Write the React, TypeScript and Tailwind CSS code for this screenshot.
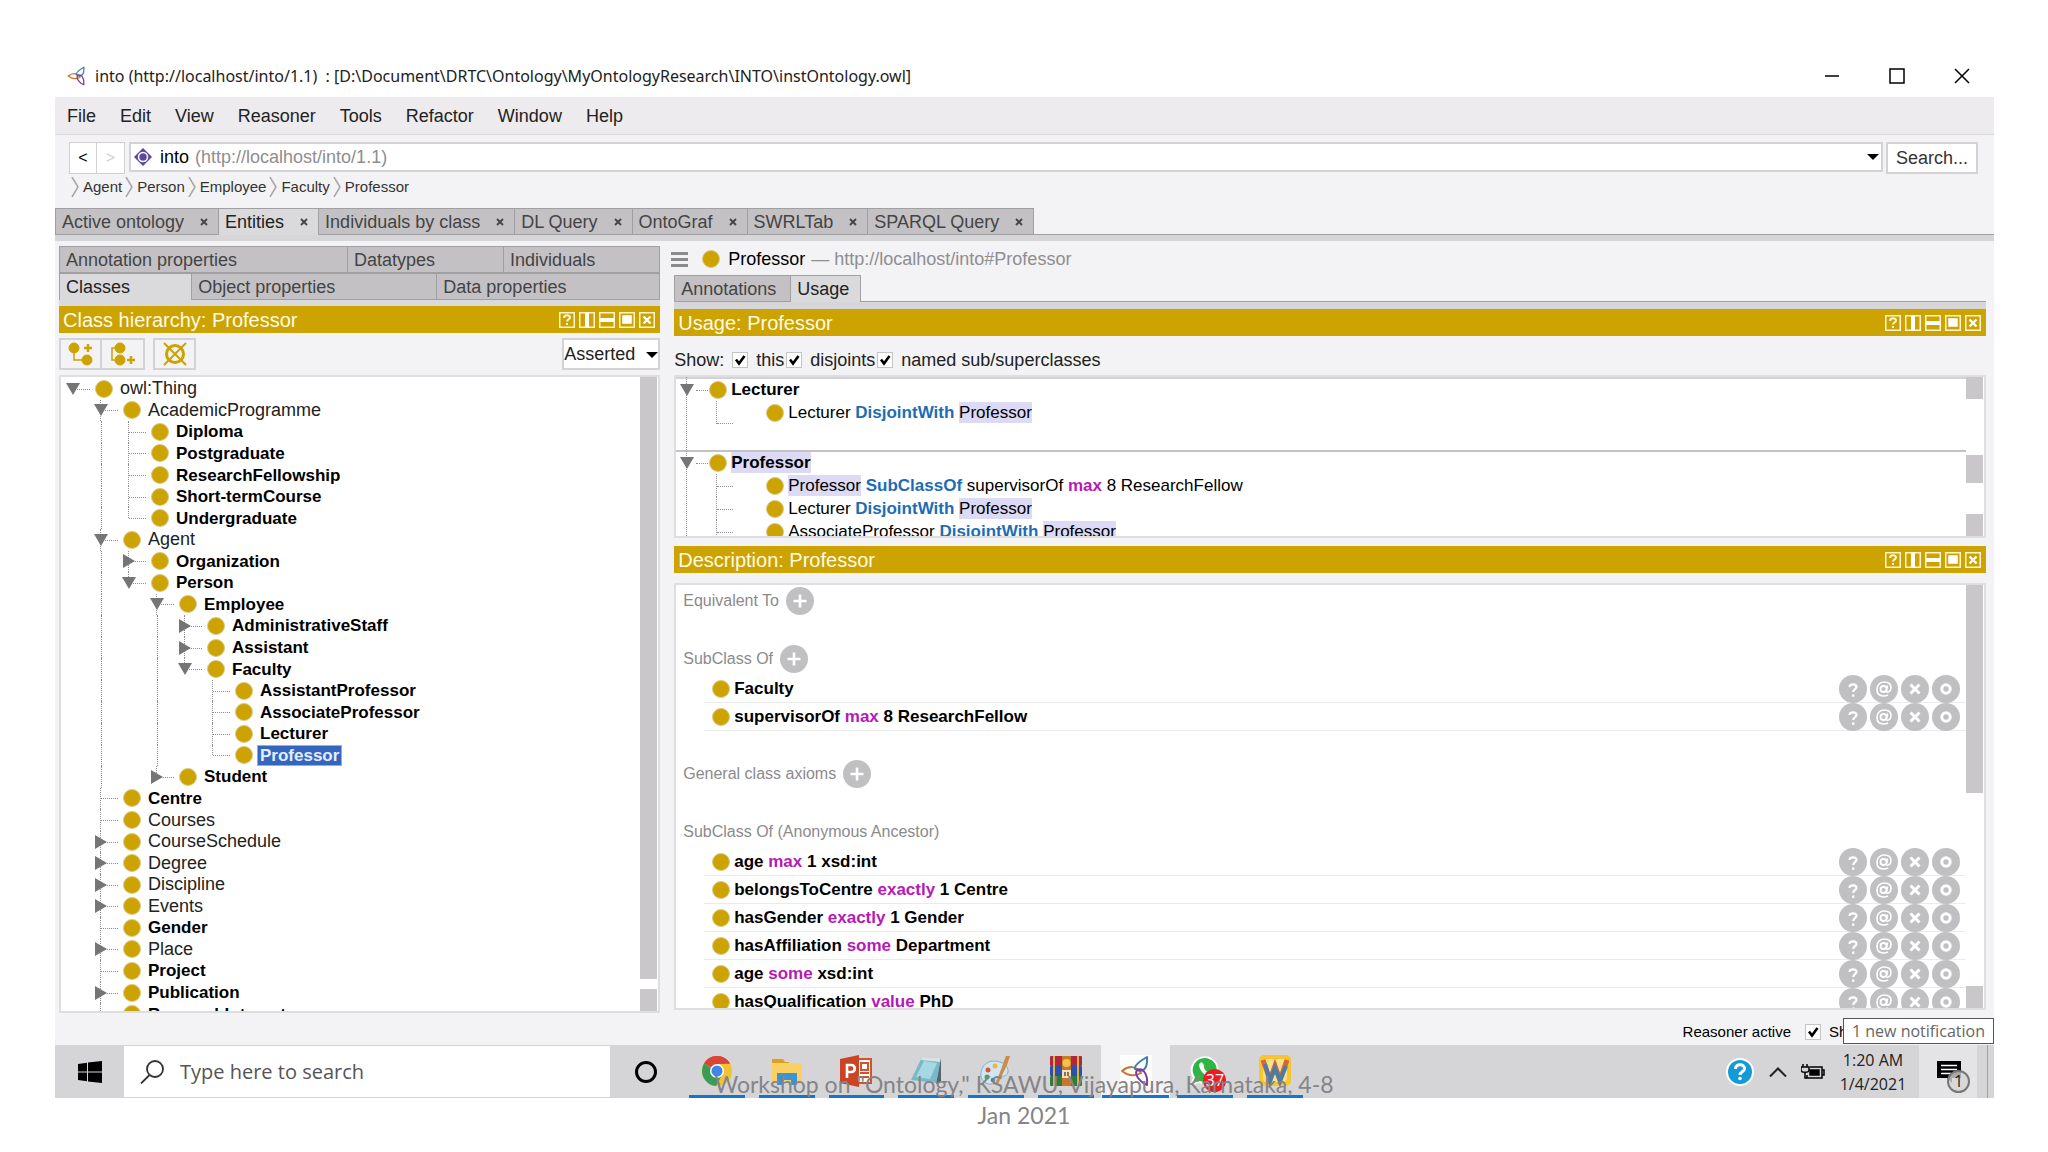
import React from 'react';

type TreeItem = {
  label: string;
  bold?: boolean;
  closed?: boolean;
  selected?: boolean;
  children?: TreeItem[];
};

type TreeRow = {
  item: TreeItem;
  level: number;
  last: boolean;
  lines: boolean[];
};

const classTree: TreeItem = {
  label: 'owl:Thing',
  children: [
    {
      label: 'AcademicProgramme',
      children: [
        { label: 'Diploma', bold: true },
        { label: 'Postgraduate', bold: true },
        { label: 'ResearchFellowship', bold: true },
        { label: 'Short-termCourse', bold: true },
        { label: 'Undergraduate', bold: true },
      ],
    },
    {
      label: 'Agent',
      children: [
        { label: 'Organization', bold: true, closed: true },
        {
          label: 'Person',
          bold: true,
          children: [
            {
              label: 'Employee',
              bold: true,
              children: [
                { label: 'AdministrativeStaff', bold: true, closed: true },
                { label: 'Assistant', bold: true, closed: true },
                {
                  label: 'Faculty',
                  bold: true,
                  children: [
                    { label: 'AssistantProfessor', bold: true },
                    { label: 'AssociateProfessor', bold: true },
                    { label: 'Lecturer', bold: true },
                    { label: 'Professor', bold: true, selected: true },
                  ],
                },
              ],
            },
            { label: 'Student', bold: true, closed: true },
          ],
        },
      ],
    },
    { label: 'Centre', bold: true },
    { label: 'Courses' },
    { label: 'CourseSchedule', closed: true },
    { label: 'Degree', closed: true },
    { label: 'Discipline', closed: true },
    { label: 'Events', closed: true },
    { label: 'Gender', bold: true },
    { label: 'Place', closed: true },
    { label: 'Project', bold: true },
    { label: 'Publication', bold: true, closed: true },
    { label: 'ResearchInterest', bold: true },
  ],
};

const flatten = (item: TreeItem, level = 0, last = true, lines: boolean[] = []): TreeRow[] => [
  { item, level, last, lines },
  ...(item.children ?? []).flatMap((child, i, all) =>
    flatten(child, level + 1, i === all.length - 1, level === 0 ? [false] : [...lines, !last]),
  ),
];

const rows = flatten(classTree);

const menus = ['File', 'Edit', 'View', 'Reasoner', 'Tools', 'Refactor', 'Window', 'Help'];
const crumbs = ['Agent', 'Person', 'Employee', 'Faculty', 'Professor'];
const mainTabs = [
  'Active ontology',
  'Entities',
  'Individuals by class',
  'DL Query',
  'OntoGraf',
  'SWRLTab',
  'SPARQL Query',
];

const Dot: React.FC<{ className?: string }> = ({ className = '' }) => (
  <span className={`block size-[18px] shrink-0 rounded-full border border-[#d9c98a] bg-[#cca300] ${className}`} />
);

const Triangle: React.FC<{ open: boolean }> = ({ open }) => (
  <svg className="relative z-10 size-3.5 shrink-0" viewBox="0 0 14 14" fill="#757476">
    {open ? <path d="M0 1h14L7 13z" /> : <path d="M1 0v14l12-7z" />}
  </svg>
);

const CaretDown: React.FC = () => (
  <svg className="h-1.5 w-3 shrink-0" viewBox="0 0 12 6" fill="#000">
    <path d="M0 0h12L6 6z" />
  </svg>
);

const ProtegeLogo: React.FC<{ className?: string }> = ({ className = '' }) => (
  <svg className={className} viewBox="0 0 32 32" fill="none" strokeWidth="2" strokeLinejoin="round">
    <path d="M2 16C8 11 16 10 21 18C14 22 7 20 2 16z" stroke="#c9772f" />
    <path d="M27 2C20 6 14 10 15 14C21 18 28 16 27 2z" stroke="#3f7fb0" />
    <path d="M27 30C20 27 14 20 17 15C23 12 28 19 27 30z" stroke="#7d3aa5" />
  </svg>
);

const Scroll: React.FC<{ className: string }> = ({ className }) => (
  <div className={`w-[17px] bg-[#c9c7ca] ${className}`} />
);

const PanelHeader: React.FC<{ title: string }> = ({ title }) => (
  <header className="flex h-[27px] items-center justify-between bg-[#cca300] pl-1 pr-[5px]">
    <h2 className="text-xl leading-6 text-[#fffbe6]">{title}</h2>
    <div className="flex gap-1">
      {['help', 'split-v', 'split-h', 'float', 'close'].map(kind => (
        <button key={kind} aria-label={kind} className="size-4">
          <svg viewBox="0 0 16 16" className="size-4" fill="none" stroke="#fff6cf" strokeWidth="1.5">
            <rect x="0.75" y="0.75" width="14.5" height="14.5" />
            {kind === 'help' && (
              <>
                <path d="M5 6c0-3.500 6-3.500 6-0.500c0 2-3 1.800-3 4" strokeWidth="2" />
                <path d="M8 11v2" strokeWidth="2" />
              </>
            )}
            {kind === 'split-v' && <path d="M8 1v14" strokeWidth="4" stroke="#fff" />}
            {kind === 'split-h' && <path d="M1 8h14" strokeWidth="4" stroke="#fff" />}
            {kind === 'float' && <rect x="4" y="4" width="8" height="7" fill="#fff" stroke="#fff" />}
            {kind === 'close' && <path d="M4.500 4.500l7 7M11.500 4.500l-7 7" strokeWidth="2.400" stroke="#fff" />}
          </svg>
        </button>
      ))}
    </div>
  </header>
);

const CheckBox: React.FC<{ id: string }> = ({ id }) => (
  <span className="relative block size-4 shrink-0">
    <input
      id={id}
      type="checkbox"
      defaultChecked
      className="peer block size-4 appearance-none border border-[#c4c3c5] bg-white"
    />
    <svg
      className="pointer-events-none absolute inset-0 hidden size-4 peer-checked:block"
      viewBox="0 0 16 16"
      fill="none"
      stroke="#000"
      strokeWidth="2.600"
    >
      <path d="M4 7.500l3 4L12.500 4" />
    </svg>
  </span>
);

const SubTab: React.FC<{ label: string; active?: boolean; className?: string }> = ({
  label,
  active = false,
  className = '',
}) => (
  <button
    className={`h-[27px] border-l border-t border-[#a09fa1] pl-1.5 text-left text-lg leading-6 ${
      active ? 'bg-[#dad9db] text-[#222]' : 'border-b bg-[#c3c1c4] text-[#444]'
    } ${className}`}
  >
    {label}
  </button>
);

const TreeLine: React.FC<{ row: TreeRow }> = ({ row }) => {
  const { item, level, last, lines } = row;
  const isParent = Boolean(item.children) || item.closed;
  return (
    <li className="flex min-h-0 flex-1 items-center">
      {lines.map((line, i) => (
        <span key={i} className="flex w-7 justify-center self-stretch">
          {line && <span className="border-l border-dotted border-[#8f8e90]" />}
        </span>
      ))}
      <span className="relative flex w-7 items-center justify-center self-stretch">
        {level > 0 && (
          <span
            className={`absolute left-[13px] top-0 border-l border-dotted border-[#8f8e90] ${
              last && item.label !== 'ResearchInterest' ? 'h-1/2' : 'h-full'
            }`}
          />
        )}
        <span className="absolute left-3.5 top-1/2 w-[17px] border-t border-dotted border-[#8f8e90]" />
        {isParent && <Triangle open={!item.closed} />}
      </span>
      <Dot className="ml-2" />
      <span
        className={`ml-1 whitespace-nowrap border px-0.5 leading-[19px] ${
          item.bold ? 'text-[17px] font-bold' : 'text-lg text-[#222]'
        } ${item.selected ? 'border-[#e0a92e] bg-[#3466bd] text-[#e4edff]' : 'border-transparent'}`}
      >
        {item.label}
      </span>
    </li>
  );
};

const Mark: React.FC<{ children: React.ReactNode }> = ({ children }) => (
  <span className="bg-[#dcdaf5] py-px">{children}</span>
);
const Axiom: React.FC<{ children: React.ReactNode }> = ({ children }) => (
  <b className="text-[#1d6db3]">{children}</b>
);
const Keyword: React.FC<{ children: React.ReactNode }> = ({ children }) => (
  <b className="text-[#b61ab6]">{children}</b>
);

const UsageRow: React.FC<{ children: React.ReactNode; end?: boolean }> = ({ children, end = false }) => (
  <li className="flex h-[23px] items-center pl-10">
    <span className="relative w-[50px] self-stretch border-l border-dotted border-[#8f8e90]">
      <span
        className={`absolute left-0 w-4 border-t border-dotted border-[#8f8e90] ${end ? 'bottom-0' : 'top-1/2'}`}
      />
    </span>
    <Dot />
    <span className="ml-1 whitespace-nowrap text-[17px] leading-5">{children}</span>
  </li>
);

const UsageHead: React.FC<{ children: React.ReactNode }> = ({ children }) => (
  <div className="relative flex h-[22px] items-center pl-1">
    <Triangle open />
    <span className="ml-0.5 w-3 border-t border-dotted border-[#8f8e90]" />
    <Dot className="ml-px" />
    <span className="ml-1 text-[17px] font-bold leading-5">{children}</span>
  </div>
);

const SectionHead: React.FC<{ label: string; add?: boolean }> = ({ label, add = true }) => (
  <div className="flex h-[30px] items-center gap-[7px] pl-[7px] text-base leading-5 text-[#8b8a8c]">
    <h3>{label}</h3>
    {add && (
      <button aria-label={`Add ${label}`} className="size-7">
        <svg viewBox="0 0 28 28" className="size-7">
          <circle cx="14" cy="14" r="14" fill="#c0bfc1" />
          <path d="M14 7.500v13M7.500 14h13" stroke="#fff" strokeWidth="2.600" />
        </svg>
      </button>
    )}
  </div>
);

const RowActions: React.FC = () => (
  <div className="flex gap-[3px]">
    {['explain', 'annotate', 'remove', 'edit'].map(kind => (
      <button key={kind} aria-label={kind} className="size-7">
        <svg viewBox="0 0 28 28" className="size-7" fill="none" stroke="#fff">
          <circle cx="14" cy="14" r="14" fill="#c0bfc1" stroke="none" />
          {kind === 'explain' && (
            <>
              <path d="M10.500 12c0-3.600 7-3.600 7 0c0 2.300-3.300 2-3.300 5" strokeWidth="2.200" />
              <path d="M14.200 19.500v2.300" strokeWidth="2.400" />
            </>
          )}
          {kind === 'annotate' && (
            <>
              <circle cx="13.5" cy="14" r="3" strokeWidth="1.8" />
              <path d="M17.500 10.500l-1 5.500c0 2.500 4.500 1 4.500-3.500c0-4-3.500-5.500-7-5.500c-4.500 0-7 3.500-7 7.500c0 4.500 3 6.500 6.500 6.500c2 0 3.500-.5 4.500-1" strokeWidth="1.600" />
            </>
          )}
          {kind === 'remove' && <path d="M9.500 9.500l9 9M18.500 9.500l-9 9" strokeWidth="3" />}
          {kind === 'edit' && <circle cx="14" cy="14" r="4.2" strokeWidth="3" />}
        </svg>
      </button>
    ))}
  </div>
);

const DescRow: React.FC<{ children: React.ReactNode }> = ({ children }) => (
  <li className="ml-7 flex h-7 items-center justify-between border-b border-[#ebeaec] pl-2 pr-1.5">
    <div className="flex items-center gap-1">
      <Dot />
      <span className="whitespace-nowrap text-[17px] font-bold leading-5">{children}</span>
    </div>
    <RowActions />
  </li>
);

const apps: { name: string; art: React.ReactNode; active?: boolean }[] = [
  {
    name: 'Chrome',
    art: (
      <>
        <circle cx="16" cy="16" r="15" fill="#f2c230" />
        <path d="M16 16L3 8.500A15 15 0 0 1 29 8.500L16 9z" fill="#d9453a" />
        <path d="M3 8.500A15 15 0 0 0 15 31l6-11z" fill="#3a9c55" />
        <path d="M3 8.500A15 15 0 0 1 29 8.500H16z" fill="#d9453a" />
        <circle cx="16" cy="16" r="7" fill="#fff" />
        <circle cx="16" cy="16" r="5.500" fill="#4285e8" />
      </>
    ),
  },
  {
    name: 'File Explorer',
    art: (
      <>
        <path d="M1 4h11l2 3h4v5H1z" fill="#dca022" />
        <path d="M1 8h30v21H1z" fill="#fad064" />
        <path d="M6 18h20v12h-6v-5h-8v5H6z" fill="#3c94d8" />
      </>
    ),
  },
  {
    name: 'PowerPoint',
    art: (
      <>
        <path d="M16 4h15v24H16z" fill="#fff" stroke="#d35230" strokeWidth="2" />
        <path d="M21 8h7v7h-7zM20 18h9M20 22h9" stroke="#d35230" strokeWidth="2" fill="none" />
        <path d="M0 4l19-4v32L0 28z" fill="#cb4424" />
        <path d="M7 23V10h4c5 0 5 7 0 7H7" stroke="#fff" strokeWidth="2.600" fill="none" />
      </>
    ),
  },
  {
    name: 'Notepad',
    art: (
      <>
        <path d="M12 2l19 1l-5 25L1 25z" fill="#79b8c9" />
        <path d="M12 2l19 1l-1 4l-19-2z" fill="#d9e3e4" />
        <path d="M14 6l13 2l-7 16L6 22z" fill="#a6d8e3" />
        <path d="M31 3v24l-5 2z" fill="#53666b" />
      </>
    ),
  },
  {
    name: 'Paint',
    art: (
      <>
        <path d="M14 6C5 6 0 14 1 21s8 10 14 7c3-2 1-5 4-6s8 0 9-5c1-6-6-11-14-11z" fill="#cfe6f2" stroke="#7db2cf" />
        <circle cx="8" cy="15" r="2.500" fill="#e0513b" />
        <circle cx="15" cy="11" r="2.500" fill="#f0b63a" />
        <circle cx="7" cy="22" r="2.500" fill="#49a652" />
        <circle cx="13" cy="25" r="2.300" fill="#3d7ed1" />
        <path d="M30 1l-3 9L18 29l-2-1l7-19l3-8z" fill="#cf8a45" />
      </>
    ),
  },
  {
    name: 'WinRAR',
    art: (
      <>
        <rect y="1" width="32" height="10" rx="1" fill="#b3263a" />
        <rect y="11" width="32" height="10" rx="1" fill="#2f4fae" />
        <rect y="21" width="32" height="10" rx="1" fill="#2c7d3a" />
        <path d="M4 1v30M28 1v30" stroke="#d9b24a" strokeWidth="2" />
        <path d="M12 1h9v30h-9z" fill="#c7792a" />
        <circle cx="16.500" cy="8" r="4" fill="#f3c24c" />
        <path d="M12 15h9v8h-9z" fill="#eee3c4" />
        <path d="M15 17v4M18 17v4" stroke="#7a4a1c" strokeWidth="1.500" />
      </>
    ),
  },
  { name: 'Protege', active: true, art: null },
  {
    name: 'WhatsApp',
    art: (
      <>
        <path d="M1 31l3-8A14 14 0 1 1 10 28z" fill="#fff" />
        <path d="M4 28l2-6A12 12 0 1 1 11 26z" fill="#2cb742" />
        <path d="M11 8c-3 3 3 13 9 13c3 0 3-3 0-4c-2 1-5-3-5-5c0-3-2-6-4-4z" fill="#fff" />
      </>
    ),
  },
  {
    name: 'WordWeb',
    art: (
      <>
        <rect width="32" height="31" rx="5" fill="#f7c531" />
        <rect x="4" y="4" width="24" height="23" rx="4" fill="#fbe08a" />
        <path d="M4 5l7 20l5-14l5 14l7-20" fill="none" stroke="#d9653a" strokeWidth="5" />
        <path d="M6 9l5 17l5-13l5 13l6-15" fill="none" stroke="#4a7da5" strokeWidth="4" />
      </>
    ),
  },
];

const TitleBar: React.FC = () => (
  <div className="flex h-[42px] items-center pl-3 pr-6">
    <ProtegeLogo className="size-5" />
    <h1 className="ml-2 flex-1 whitespace-pre font-['Noto_Sans',sans-serif] text-base leading-6 text-[#222]">
      {'into (http://localhost/into/1.1)  : [D:\\Document\\DRTC\\Ontology\\MyOntologyResearch\\INTO\\instOntology.owl]'}
    </h1>
    <div className="flex gap-[49px]">
      <button aria-label="Minimize" className="size-4">
        <svg viewBox="0 0 16 16" className="size-4" stroke="#000" strokeWidth="1.500">
          <path d="M1 8h14" />
        </svg>
      </button>
      <button aria-label="Maximize" className="size-4">
        <svg viewBox="0 0 16 16" className="size-4" stroke="#000" strokeWidth="1.500" fill="none">
          <rect x="1" y="1" width="14" height="14" />
        </svg>
      </button>
      <button aria-label="Close" className="size-4">
        <svg viewBox="0 0 16 16" className="size-4" stroke="#000" strokeWidth="1.500">
          <path d="M1 1l14 14M15 1L1 15" />
        </svg>
      </button>
    </div>
  </div>
);

const NavBar: React.FC = () => (
  <div className="bg-[#f3f2f4] pb-2 pl-3.5 pr-4 pt-[7px]">
    <div className="flex items-start text-lg leading-6">
      <button className="h-8 w-7 border border-[#d0cfd1] bg-white text-base">&lt;</button>
      <button className="h-8 w-7 border border-l-0 border-[#d0cfd1] bg-white text-base text-[#d0cfd1]">&gt;</button>
      <button
        aria-haspopup="listbox"
        className="ml-1 flex h-[30px] flex-1 items-center border-2 border-[#d3d2d4] bg-white pl-[3px] pr-0.5 text-left"
      >
        <svg viewBox="0 0 18 18" className="mr-2 size-[18px]">
          <path d="M9 0l9 9l-9 9l-9-9z" fill="#5b47a0" />
          <circle cx="9" cy="9" r="4.500" fill="none" stroke="#fff" strokeWidth="1.500" />
        </svg>
        <span>into</span>
        <span className="ml-1.5 flex-1 text-[#8f8e90]">(http://localhost/into/1.1)</span>
        <CaretDown />
      </button>
      <button className="ml-[3px] h-8 w-[92px] border-2 border-[#d3d2d4] bg-white text-[#333]">Search...</button>
    </div>
    <nav className="flex h-[26px] items-center text-[15px] leading-5 text-[#333]">
      {crumbs.map(crumb => (
        <a key={crumb} href="#" className="flex items-center">
          <svg viewBox="0 0 8 20" className="ml-0.5 mr-1 h-5 w-2" fill="none" stroke="#a6a5a7" strokeWidth="1.500">
            <path d="M1 0l6 10L1 20" />
          </svg>
          <span className="mr-px">{crumb}</span>
        </a>
      ))}
    </nav>
  </div>
);

const MainTabs: React.FC = () => (
  <div className="bg-[#f3f2f4]">
    <div className="flex h-[27px] text-lg leading-6">
      {mainTabs.map(tab => (
        <div
          key={tab}
          className={`flex items-center gap-4 border-l border-t border-[#a09fa1] pl-1.5 pr-2.5 ${
            tab === 'Entities' ? 'bg-[#dad9db] text-[#222]' : 'border-b bg-[#c3c1c4] text-[#444]'
          }`}
        >
          <button className="whitespace-nowrap">{tab}</button>
          <button aria-label={`Close ${tab}`} className="size-2">
            <svg viewBox="0 0 8 8" className="size-2" stroke="#444" strokeWidth="1.800">
              <path d="M1 1l6 6M7 1L1 7" />
            </svg>
          </button>
        </div>
      ))}
      <div className="flex-1 border-b border-l border-[#a09fa1]" />
    </div>
    <div className="h-1.5 bg-[#d6d5d7]" />
  </div>
);

const ClassPanel: React.FC = () => (
  <section className="w-[31.2%] shrink-0 pt-[5px]">
    <div className="border-r border-[#a09fa1]">
      <div className="flex">
        <SubTab label="Annotation properties" className="flex-[292]" />
        <SubTab label="Datatypes" className="flex-[155]" />
        <SubTab label="Individuals" className="flex-[155]" />
      </div>
      <div className="flex">
        <SubTab label="Classes" active className="flex-[130]" />
        <SubTab label="Object properties" className="flex-[247]" />
        <SubTab label="Data properties" className="flex-[224]" />
      </div>
    </div>
    <div className="h-1.5 bg-[#dad9db]" />
    <PanelHeader title="Class hierarchy: Professor" />
    <div className="flex h-[42px] items-center">
      <button aria-label="Add subclass" className="flex h-8 w-[43px] items-center justify-center border-2 border-[#d3d2d4]">
        <svg viewBox="0 0 26 24" className="h-6 w-[26px]" fill="#cca300" stroke="#cca300">
          <circle cx="6" cy="6" r="5" />
          <circle cx="19" cy="18" r="5" />
          <path d="M6 10v8h9" fill="none" strokeWidth="1.500" />
          <path d="M20 2v8M16 6h8" strokeWidth="2.500" />
        </svg>
      </button>
      <button aria-label="Add sibling class" className="flex h-8 w-[43px] items-center justify-center border-2 border-l-0 border-[#d3d2d4]">
        <svg viewBox="0 0 26 24" className="h-6 w-[26px]" fill="#cca300" stroke="#cca300">
          <circle cx="10" cy="6" r="5" />
          <circle cx="10" cy="18" r="5" />
          <path d="M6 6H2v12h4" fill="none" strokeWidth="1.500" />
          <path d="M21 14v8M17 18h8" strokeWidth="2.500" />
        </svg>
      </button>
      <button aria-label="Delete class" className="ml-2 flex h-8 w-[43px] items-center justify-center border-2 border-[#d3d2d4]">
        <svg viewBox="0 0 24 24" className="size-6" fill="none" stroke="#cca300">
          <circle cx="12" cy="12" r="8.500" strokeWidth="3" />
          <path d="M1 1l22 22M23 1L1 23" strokeWidth="2" />
        </svg>
      </button>
      <div className="relative ml-auto">
        <select
          aria-label="Hierarchy mode"
          className="h-8 w-[98px] appearance-none border-2 border-[#d3d2d4] bg-white text-lg leading-6 text-[#222]"
        >
          <option>Asserted</option>
        </select>
        <div className="pointer-events-none absolute right-0.5 top-3.5">
          <CaretDown />
        </div>
      </div>
    </div>
    <div className="flex h-[638px] justify-between overflow-hidden border-2 border-[#dedde0] bg-white pr-px">
      <ul className="-ml-0.5 flex h-[648px] flex-col pt-px">
        {rows.map(row => (
          <TreeLine key={row.item.label} row={row} />
        ))}
      </ul>
      <div className="flex flex-col gap-2.5">
        <Scroll className="flex-1" />
        <Scroll className="h-[22px]" />
      </div>
    </div>
  </section>
);

const UsagePanel: React.FC = () => (
  <>
    <div className="flex h-[34px] items-center pt-0.5 text-lg leading-6">
      <button aria-label="Menu" className="-ml-[3px] flex w-[17px] flex-col gap-[3px]">
        <span className="h-[3px] bg-[#8b8a8c]" />
        <span className="h-[3px] bg-[#8b8a8c]" />
        <span className="h-[3px] bg-[#8b8a8c]" />
      </button>
      <Dot className="ml-3.5" />
      <span className="ml-2 text-black">Professor</span>
      <span className="ml-1.5 text-[#8f8e90]">— http://localhost/into#Professor</span>
    </div>
    <div className="flex">
      <SubTab label="Annotations" className="w-[116px]" />
      <SubTab label="Usage" active className="w-[71px] border-r" />
      <div className="flex-1 border-b border-[#a09fa1]" />
    </div>
    <div className="h-[7px] bg-[#d6d5d7]" />
    <PanelHeader title="Usage: Professor" />
    <div className="flex h-[39px] items-center pt-2 text-lg leading-6 text-[#222]">
      <span className="mr-2">Show:</span>
      <CheckBox id="show-this" />
      <label htmlFor="show-this" className="ml-2 mr-0.5">this</label>
      <CheckBox id="show-disjoints" />
      <label htmlFor="show-disjoints" className="ml-2 mr-0.5">disjoints</label>
      <CheckBox id="show-named" />
      <label htmlFor="show-named" className="ml-2">named sub/superclasses</label>
    </div>
    <div className="flex h-[163px] justify-between overflow-hidden border-2 border-[#dedde0] bg-white pr-px">
      <div className="relative flex-1">
        <span className="absolute inset-y-0 left-2.5 border-l border-dotted border-[#8f8e90]" />
        <div className="h-[73px] border-t-2 border-[#d3d2d4]">
          <UsageHead>Lecturer</UsageHead>
          <ul>
            <UsageRow end>
              Lecturer <Axiom>DisjointWith</Axiom> <Mark>Professor</Mark>
            </UsageRow>
          </ul>
        </div>
        <div className="border-t-2 border-[#c3c2c4]">
          <UsageHead>
            <Mark>Professor</Mark>
          </UsageHead>
          <ul>
            <UsageRow>
              <Mark>Professor</Mark> <Axiom>SubClassOf</Axiom> supervisorOf <Keyword>max</Keyword> 8 ResearchFellow
            </UsageRow>
            <UsageRow>
              Lecturer <Axiom>DisjointWith</Axiom> <Mark>Professor</Mark>
            </UsageRow>
            <UsageRow>
              AssociateProfessor <Axiom>DisjointWith</Axiom> <Mark>Professor</Mark>
            </UsageRow>
          </ul>
        </div>
      </div>
      <div className="flex flex-col justify-between">
        <Scroll className="h-[22px]" />
        <Scroll className="mt-6 h-7" />
        <Scroll className="h-[22px]" />
      </div>
    </div>
  </>
);

const DescriptionPanel: React.FC = () => (
  <section className="mt-2">
    <PanelHeader title="Description: Professor" />
    <div className="mt-2.5 flex h-[427px] overflow-hidden border-2 border-[#dedde0] bg-white pr-px">
      <div className="flex flex-1 flex-col gap-[29px] pt-0.5">
        <SectionHead label="Equivalent To" />
        <div>
          <SectionHead label="SubClass Of" />
          <ul className="pt-px">
            <DescRow>Faculty</DescRow>
            <DescRow>
              supervisorOf <Keyword>max</Keyword> 8 ResearchFellow
            </DescRow>
          </ul>
        </div>
        <SectionHead label="General class axioms" />
        <div>
          <SectionHead label="SubClass Of (Anonymous Ancestor)" add={false} />
          <ul className="pt-px">
            <DescRow>age <Keyword>max</Keyword> 1 xsd:int</DescRow>
            <DescRow>belongsToCentre <Keyword>exactly</Keyword> 1 Centre</DescRow>
            <DescRow>hasGender <Keyword>exactly</Keyword> 1 Gender</DescRow>
            <DescRow>hasAffiliation <Keyword>some</Keyword> Department</DescRow>
            <DescRow>age <Keyword>some</Keyword> xsd:int</DescRow>
            <DescRow>hasQualification <Keyword>value</Keyword> PhD</DescRow>
          </ul>
        </div>
      </div>
      <div className="flex flex-col justify-between">
        <Scroll className="h-[208px]" />
        <Scroll className="h-[22px]" />
      </div>
    </div>
  </section>
);

const Taskbar: React.FC = () => (
  <footer className="flex h-[53px] bg-[#d5d4d6] font-['Open_Sans',sans-serif]">
    <button aria-label="Start" className="flex w-[69px] items-center justify-center">
      <svg viewBox="0 0 24 22" className="h-[22px] w-6" fill="#000">
        <path d="M0 3l9-1.300v8.800H0zM10 1.500L24 0v10.500H10zM0 11.500h9v8.800L0 19zM10 11.500h14V22l-14-1.500z" />
      </svg>
    </button>
    <label className="my-px flex w-[486px] items-center bg-white pl-4">
      <svg viewBox="0 0 24 24" className="size-6" fill="none" stroke="#333" strokeWidth="1.800">
        <circle cx="15" cy="9" r="8" />
        <path d="M9.500 15L1 23.500" />
      </svg>
      <input
        type="text"
        aria-label="Search"
        placeholder="Type here to search"
        className="ml-4 flex-1 text-xl leading-6 outline-none placeholder:text-[#555]"
      />
    </label>
    <button aria-label="Cortana" className="flex w-[72px] items-center justify-center">
      <span className="size-[22px] rounded-full border-3 border-black" />
    </button>
    <div className="flex w-[628px]">
      {apps.map(app => (
        <button
          key={app.name}
          aria-label={app.name}
          className={`relative flex flex-1 justify-center border-x border-transparent pt-2.5 ${
            app.active ? 'bg-[#f3f2f4]' : ''
          }`}
        >
          {app.active ? (
            <ProtegeLogo className="size-8 bg-white" />
          ) : (
            <svg viewBox="0 0 32 32" className="size-8">
              {app.art}
            </svg>
          )}
          {app.name === 'WhatsApp' && (
            <span className="absolute left-8 top-6 size-[23px] rounded-full bg-[#ec1c24] text-center text-base leading-[22px] text-white">
              37
            </span>
          )}
          <span className={`absolute bottom-0 h-[3px] bg-[#1277cc] ${app.active ? 'inset-x-0' : 'inset-x-1.5'}`} />
        </button>
      ))}
    </div>
    <div className="ml-auto flex items-center">
      <button aria-label="Help" className="size-7">
        <svg viewBox="0 0 28 28" className="size-7" fill="none">
          <circle cx="14" cy="14" r="14" fill="#fff" />
          <circle cx="14" cy="14" r="12" fill="#149bd7" />
          <path d="M9.500 11c0-6 9-5.500 9-0.500c0 3.500-4.500 3-4.500 6.500" stroke="#fff" strokeWidth="3" />
          <circle cx="14" cy="20.500" r="1.800" fill="#fff" />
        </svg>
      </button>
      <button aria-label="Show hidden icons" className="ml-[15px] w-[18px]">
        <svg viewBox="0 0 18 10" className="h-2.5 w-[18px]" fill="none" stroke="#222" strokeWidth="2">
          <path d="M1 9.500L9 1.500l8 8" />
        </svg>
      </button>
      <button aria-label="Battery" className="ml-3.5 w-6">
        <svg viewBox="0 0 24 16" className="h-4 w-6" fill="none" stroke="#000" strokeWidth="1.500">
          <path d="M9 3h12v11H6V11M21 6h2v5h-2" />
          <path d="M9 6h9v5H9z" fill="#000" />
          <path d="M2 0v3M6 0v3M0 3h8v3c0 3-8 3-8 0zM4 8v6h2" />
        </svg>
      </button>
      <div className="ml-1.5 mr-1 w-[84px] text-center text-base leading-6 text-[#222]">
        <div>1:20 AM</div>
        <div>1/4/2021</div>
      </div>
      <button aria-label="Notifications" className="relative flex w-[58px] self-stretch bg-[#e4e3e5] pl-[18px] pt-4">
        <svg viewBox="0 0 24 22" className="h-[22px] w-6" fill="#000">
          <path d="M0 0h24v17h-9v5l-5-5H0z" />
          <path d="M4 4.500h16M4 8.500h16M4 12.500h10" stroke="#fff" strokeWidth="1.500" />
        </svg>
        <span className="absolute left-7 top-[25px] size-[23px] rounded-full border-2 border-[#777] bg-[#d5d4d6]/80 text-center text-base leading-[19px] text-[#222]">
          1
        </span>
      </button>
      <span className="ml-2.5 mr-1.5 w-px self-stretch bg-[#a09fa1]" />
    </div>
  </footer>
);

const App: React.FC = () => (
  <main className="relative min-h-screen bg-white pl-[55px] pr-[54px] pt-[55px] font-['Liberation_Sans',Arial,sans-serif] text-black">
    <TitleBar />
    <nav className="flex h-[38px] items-center gap-6 border-b border-[#dad9db] bg-[#edebed] pl-3 text-lg leading-6 text-[#222]">
      {menus.map(menu => (
        <button key={menu}>{menu}</button>
      ))}
    </nav>
    <NavBar />
    <MainTabs />
    <div className="flex gap-3.5 bg-[#f3f2f4] pl-1 pr-2">
      <ClassPanel />
      <section className="min-w-0 flex-1">
        <UsagePanel />
        <DescriptionPanel />
      </section>
    </div>
    <div className="relative flex h-8 items-center justify-end bg-[#f3f2f4] pr-[120px] pt-1.5 text-[15px] leading-5">
      <span className="mr-3.5">Reasoner active</span>
      <CheckBox id="show-inferences" />
      <label htmlFor="show-inferences" className="ml-2 w-[45px]">Show</label>
      <div
        role="tooltip"
        className="absolute right-0 top-[5px] z-20 whitespace-nowrap border border-[#555] bg-white px-2 font-['Open_Sans',sans-serif] text-base leading-6 text-[#666]"
      >
        1 new notification
      </div>
    </div>
    <Taskbar />
    <p className="pointer-events-none absolute inset-x-0 top-[1069px] mx-auto w-[640px] text-center font-['Lato',sans-serif] text-[23px] leading-[31px] text-[#858486]">
      Workshop on "Ontology," KSAWU, Vijayapura, Karnataka, 4-8 Jan 2021
    </p>
  </main>
);

export default App;
